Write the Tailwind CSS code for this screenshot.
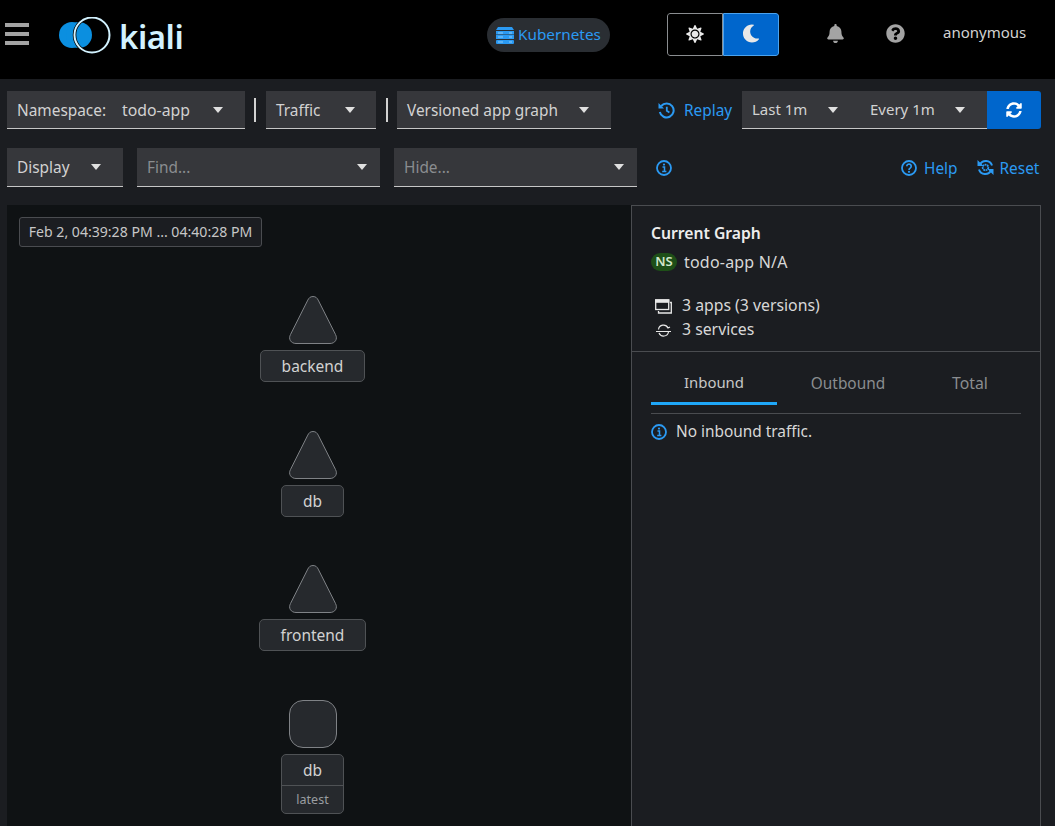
<!DOCTYPE html>
<html><head><meta charset="utf-8">
<script src="https://cdn.jsdelivr.net/npm/@tailwindcss/browser@4"></script>
</head>
<body class="m-0 bg-[#1b1d21] font-['Noto_Sans',sans-serif] text-[#e0e0e0] text-base overflow-hidden">
<div class="w-[1055px] h-[826px] flex flex-col overflow-hidden">
<header class="h-[79px] shrink-0 bg-black flex items-center relative">
  <div class="ml-[5px] w-[24px] flex flex-col gap-[5px] -mt-[12px]">
    <span class="h-[4px] bg-[#a3a3a3]"></span><span class="h-[4px] bg-[#a3a3a3]"></span><span class="h-[4px] bg-[#a3a3a3]"></span>
  </div>
  <svg class="ml-[30px] -mt-[7px]" width="53" height="38" viewBox="0 0 53 38"><circle cx="13" cy="18" r="13" fill="#0b8fe0"/><circle cx="20" cy="18" r="13" fill="#0b8fe0"/><circle cx="33" cy="18" r="17.500" fill="none" stroke="#000" stroke-width="3.500"/><circle cx="33" cy="18" r="17.500" fill="none" stroke="#d2f2ff" stroke-width="2"/></svg>
  <span class="ml-[7px] -mt-[7px] text-[33px] leading-none font-semibold text-[#d2f2ff] tracking-[-0.5px]">kiali</span>
  <div class="absolute left-[487px] top-[18px] w-[123px] h-[34px] rounded-full bg-[#2a2e33] flex items-center pl-[9px] gap-[4px] text-[#2b9af3] text-[15.300px]">
    <svg width="18" height="18" viewBox="0 0 18 18"><path d="M2 1h14l2 3H0z" fill="#2b9af3"/><rect y="5" width="18" height="3.500" fill="#2b9af3"/><rect y="9" width="18" height="4" fill="#2b9af3"/><rect y="14" width="18" height="4" rx="1" fill="#2b9af3"/><path d="M2 7h5M2 11h5M2 16h5" stroke="#a8d8f8" stroke-width=".8"/><path d="M13 7h3M13 11h3M13 16h3" stroke="#a8d8f8" stroke-width=".8"/></svg>
    <span class="-mt-[1px]">Kubernetes</span>
  </div>
  <div class="absolute left-[667px] top-[13px] w-[112px] h-[43px] flex rounded-[3px] overflow-hidden">
    <div class="w-[56px] border border-[#8a8d90] rounded-l-[3px] bg-black flex items-center justify-center pb-[2px]">
      <svg width="18" height="18" viewBox="0 0 512 512" fill="#e8e8e8"><path d="M256 160c-52.900 0-96 43.100-96 96s43.100 96 96 96 96-43.100 96-96-43.100-96-96-96zm246.400 80.500l-94.700-47.300 33.500-100.400c4.500-13.600-8.400-26.500-21.900-21.900l-100.400 33.500-47.400-94.800c-6.400-12.800-24.600-12.800-31 0l-47.300 94.700L92.700 70.800c-13.600-4.500-26.500 8.400-21.900 21.900l33.500 100.400-94.700 47.400c-12.800 6.400-12.800 24.600 0 31l94.700 47.300-33.500 100.500c-4.500 13.600 8.400 26.500 21.900 21.900l100.400-33.500 47.300 94.700c6.400 12.800 24.600 12.800 31 0l47.300-94.700 100.400 33.500c13.600 4.500 26.500-8.400 21.900-21.900l-33.500-100.400 94.700-47.300c13-6.500 13-24.700.2-31.100zm-155.900 106c-49.900 49.900-131.100 49.900-181 0-49.900-49.900-49.900-131.100 0-181 49.900-49.900 131.100-49.900 181 0 49.900 49.900 49.900 131.100 0 181z"/></svg>
    </div>
    <div class="flex-1 bg-[#0066cc] border border-[#4aa3ef] rounded-r-[3px] flex items-center justify-center pb-[2px]">
      <svg width="18" height="19" viewBox="0 0 512 512" fill="#e8e8e8"><path d="M283.211 512c78.962 0 151.079-35.925 198.857-94.792 7.068-8.708-.639-21.430-11.562-19.350-124.203 23.654-238.262-71.576-238.262-196.954 0-72.222 38.662-138.635 101.498-174.394 9.686-5.512 7.250-20.197-3.756-22.230A258.156 258.156 0 0 0 283.211 0c-141.309 0-256 114.511-256 256 0 141.309 114.511 256 256 256z"/></svg>
    </div>
  </div>
  <svg class="absolute left-[827px] top-[24px]" width="17" height="19" viewBox="0 0 448 512" fill="#a3a3a3"><path d="M224 512c35.320 0 63.970-28.650 63.970-64H160.030c0 35.350 28.650 64 63.970 64zm215.390-149.710c-19.320-20.760-55.470-51.990-55.470-154.290 0-77.700-54.480-139.900-127.940-155.160V32c0-17.670-14.320-32-31.980-32s-31.980 14.330-31.980 32v20.840C118.560 68.100 64.080 130.300 64.080 208c0 102.300-36.150 133.530-55.470 154.290-6 6.450-8.660 14.160-8.610 21.710.11 16.400 12.980 32 32.100 32h383.800c19.120 0 32-15.600 32.100-32 .05-7.550-2.610-15.270-8.610-21.710z"/></svg>
  <svg class="absolute left-[886px] top-[24px]" width="19" height="19" viewBox="0 0 512 512" fill="#a3a3a3"><path d="M504 256c0 136.997-111.043 248-248 248S8 392.997 8 256C8 119.083 119.043 8 256 8s248 111.083 248 248zM262.655 90c-54.497 0-89.255 22.957-116.549 63.758-3.536 5.286-2.353 12.415 2.715 16.258l34.699 26.310c5.205 3.947 12.621 3.008 16.665-2.122 17.864-22.658 30.113-35.797 57.303-35.797 20.429 0 45.698 13.148 45.698 32.958 0 14.976-12.363 22.667-32.534 33.976C247.128 238.528 216 254.941 216 296v4c0 6.627 5.373 12 12 12h56c6.627 0 12-5.373 12-12v-1.333c0-28.462 83.186-29.647 83.186-106.667 0-58.002-60.165-102-116.531-102zM256 338c-25.365 0-46 20.635-46 46 0 25.364 20.635 46 46 46s46-20.636 46-46c0-25.365-20.635-46-46-46z"/></svg>
  <span class="absolute left-[943px] top-[21px] text-[15px] text-[#d2d2d2] leading-[22px]">anonymous</span>
</header>

<div class="h-[38px] mt-[12px] shrink-0 flex items-stretch pl-[7px] text-[#d2d2d2] text-[15.400px]">
  <div class="w-[238px] bg-[#36373b] border-b border-[#c7c7c7] flex items-center pl-[10px] pr-[22px]"><span class="pt-[2px]">Namespace:</span><span class="ml-[16px] pt-[2px] text-[15.800px]">todo-app</span><svg class="ml-auto" width="10" height="6" viewBox="0 0 10 6" fill="#e0e0e0"><path d="M0 0h10L5 6z"/></svg></div>
  <span class="w-[2px] h-[24px] self-center bg-[#d2d2d2] ml-[9px]"></span>
  <div class="ml-[10px] w-[110px] bg-[#36373b] border-b border-[#c7c7c7] flex items-center pl-[10px] pr-[21px]"><span class="pt-[2px]">Traffic</span><svg class="ml-auto" width="10" height="6" viewBox="0 0 10 6" fill="#e0e0e0"><path d="M0 0h10L5 6z"/></svg></div>
  <span class="w-[2px] h-[24px] self-center bg-[#d2d2d2] ml-[10px]"></span>
  <div class="ml-[9px] w-[214px] bg-[#36373b] border-b border-[#c7c7c7] flex items-center pl-[10px] pr-[22px]"><span class="pt-[2px]">Versioned app graph</span><svg class="ml-auto" width="10" height="6" viewBox="0 0 10 6" fill="#e0e0e0"><path d="M0 0h10L5 6z"/></svg></div>
  <div class="ml-[47px] w-[84px] flex items-center text-[#2b9af3]">
    <svg width="17" height="17" viewBox="0 0 17 17" fill="none" stroke="#2b9af3" stroke-width="2"><path d="M3.200 4a7 7 0 1 1-1.400 6"/><path d="M.5 1v5.500H6z" fill="#2b9af3" stroke="none"/><path d="M8.800 4.800v4l2.600 1.700" stroke-width="1.800"/></svg>
    <span class="ml-[9px] pt-[2px]">Replay</span>
  </div>
  <div class="w-[245px] bg-[#36373b] border-b border-[#c7c7c7] flex items-center pl-[10px]">
    <span class="w-[76px] text-[15px]">Last 1m</span><svg width="10" height="6" viewBox="0 0 10 6" fill="#e0e0e0"><path d="M0 0h10L5 6z"/></svg>
    <span class="ml-[32px] w-[85px] text-[15px]">Every 1m</span><svg width="10" height="6" viewBox="0 0 10 6" fill="#e0e0e0"><path d="M0 0h10L5 6z"/></svg>
  </div>
  <div class="w-[54px] bg-[#0066cc] rounded-r-[3px] flex items-center justify-center">
    <svg width="16" height="16" viewBox="0 0 512 512" fill="#fff"><path d="M370.720 133.280C339.458 104.008 298.888 87.962 255.848 88c-77.458.068-144.328 53.178-162.791 126.850-1.344 5.363-6.122 9.150-11.651 9.150H24.103c-7.498 0-13.194-6.807-11.807-14.176C33.933 94.924 134.813 8 256 8c66.448 0 126.791 26.136 171.315 68.685L463.030 40.970C478.149 25.851 504 36.559 504 57.941V192c0 13.255-10.745 24-24 24H345.941c-21.382 0-32.090-25.851-16.971-40.971l41.750-41.749zM32 296h134.059c21.382 0 32.090 25.851 16.971 40.971l-41.750 41.750c31.262 29.273 71.835 45.319 114.876 45.280 77.418-.07 144.315-53.144 162.787-126.849 1.344-5.363 6.122-9.150 11.651-9.150h57.304c7.498 0 13.194 6.807 11.807 14.176C478.067 417.076 377.187 504 256 504c-66.448 0-126.791-26.136-171.315-68.685L48.970 471.030C33.851 486.149 8 475.441 8 454.059V320c0-13.255 10.745-24 24-24z"/></svg>
  </div>
</div>

<div class="h-[39px] mt-[19px] shrink-0 flex items-stretch pl-[7px] text-[#d2d2d2] text-[15.400px]">
  <div class="w-[116px] bg-[#36373b] border-b border-[#c7c7c7] flex items-center pl-[10px] pr-[22px]"><span class="pt-[2px]">Display</span><svg class="ml-auto" width="10" height="6" viewBox="0 0 10 6" fill="#e0e0e0"><path d="M0 0h10L5 6z"/></svg></div>
  <div class="ml-[14px] w-[243px] bg-[#36373b] border-b border-[#c7c7c7] flex items-center pl-[10px] pr-[13px] text-[#8a8d90]"><span class="pt-[2px]">Find...</span><svg class="ml-auto" width="10" height="6" viewBox="0 0 10 6" fill="#e0e0e0"><path d="M0 0h10L5 6z"/></svg></div>
  <div class="ml-[14px] w-[243px] bg-[#36373b] border-b border-[#c7c7c7] flex items-center pl-[10px] pr-[13px] text-[#8a8d90]"><span class="pt-[2px]">Hide...</span><svg class="ml-auto" width="10" height="6" viewBox="0 0 10 6" fill="#e0e0e0"><path d="M0 0h10L5 6z"/></svg></div>
  <svg class="ml-[19px] self-center" width="16" height="16" viewBox="0 0 16 16" fill="none" stroke="#2b9af3" stroke-width="1.800"><circle cx="8" cy="8" r="7"/><path d="M6.500 7h2v4.500M6.200 11.500h4.200" stroke-width="1.500"/><circle cx="8" cy="4.600" r="1.100" fill="#2b9af3" stroke="none"/></svg>
  <div class="ml-[229px] flex items-center text-[#2b9af3]">
    <svg width="16" height="16" viewBox="0 0 16 16" fill="none" stroke="#2b9af3" stroke-width="1.800"><circle cx="8" cy="8" r="7"/><path d="M5.800 6.300a2.200 2.200 0 1 1 3.400 1.800c-.8.500-1.200.9-1.200 1.800" stroke-width="1.700"/><circle cx="8" cy="11.800" r="1.100" fill="#2b9af3" stroke="none"/></svg>
    <span class="ml-[7px] pt-[2px]">Help</span>
    <svg class="ml-[19px]" width="17" height="17" viewBox="0 0 17 17" fill="none" stroke="#2b9af3" stroke-width="2"><path d="M3 5.500A6.500 6.500 0 0 1 15 6.500M14 11.500A6.500 6.500 0 0 1 2 10.500"/><path d="M.5 1v6h6zM16.500 16v-6h-6z" fill="#2b9af3" stroke="none"/><circle cx="8.500" cy="8.500" r="2.800" stroke-width="1.800" stroke-dasharray="1.800 .6"/></svg>
    <span class="ml-[6px] pt-[2px]">Reset</span>
  </div>
</div>

<main class="mt-[18px] flex-1 flex pl-[7px] pr-[14px] min-h-0">
  <div class="w-[624px] bg-[#0f1214] relative overflow-hidden">
    <div class="absolute left-[12px] top-[12px] w-[243px] h-[30px] bg-[#1b1d21] border border-[#4a4c50] rounded-[3px] flex items-center justify-center text-[14.100px] text-[#c7c7c7] whitespace-nowrap">Feb 2, 04:39:28 PM ... 04:40:28 PM</div>

    <svg class="absolute left-[281.500px] top-[91px]" width="48" height="48" viewBox="0 0 48 48"><path d="M24 .5c-2.800 0-4.200 1.600-5.200 3.600L1.500 38.500C-1 43 2 47.500 7 47.500h34c5 0 8-4.500 5.500-9L29.200 4.100C28.200 2.100 26.800.5 24 .5z" fill="#26292d" stroke="#7f8286" stroke-width="1"/></svg>
    <div class="absolute left-[253px] top-[145px] w-[105px] h-[32px] pt-[2px] bg-[#26292d] border border-[#4f5255] rounded-[5px] flex items-center justify-center text-[15.500px] text-[#d2d2d2]">backend</div>

    <svg class="absolute left-[281.500px] top-[226px]" width="48" height="48" viewBox="0 0 48 48"><path d="M24 .5c-2.800 0-4.200 1.600-5.200 3.600L1.500 38.500C-1 43 2 47.500 7 47.500h34c5 0 8-4.500 5.500-9L29.200 4.100C28.200 2.100 26.800.5 24 .5z" fill="#26292d" stroke="#7f8286" stroke-width="1"/></svg>
    <div class="absolute left-[274px] top-[280px] w-[63px] h-[32px] pt-[2px] bg-[#26292d] border border-[#4f5255] rounded-[5px] flex items-center justify-center text-[15.500px] text-[#d2d2d2]">db</div>

    <svg class="absolute left-[281.500px] top-[360px]" width="48" height="48" viewBox="0 0 48 48"><path d="M24 .5c-2.800 0-4.200 1.600-5.200 3.600L1.500 38.500C-1 43 2 47.500 7 47.500h34c5 0 8-4.500 5.500-9L29.200 4.100C28.200 2.100 26.800.5 24 .5z" fill="#26292d" stroke="#7f8286" stroke-width="1"/></svg>
    <div class="absolute left-[252px] top-[414px] w-[107px] h-[32px] pt-[2px] bg-[#26292d] border border-[#4f5255] rounded-[5px] flex items-center justify-center text-[15.500px] text-[#d2d2d2]">frontend</div>

    <div class="absolute left-[281.500px] top-[495px] w-[48px] h-[48px] bg-[#26292d] border border-[#7f8286] rounded-[14px]"></div>
    <div class="absolute left-[274px] top-[549px] w-[63px] h-[60px] bg-[#26292d] border border-[#4f5255] rounded-[5px] flex flex-col text-[#d2d2d2]">
      <div class="h-[31px] pt-[2px] flex items-center justify-center text-[15.500px] border-b border-[#4f5255]">db</div>
      <div class="flex-1 pt-[2px] flex items-center justify-center text-[12.500px] text-[#9a9da0]">latest</div>
    </div>
  </div>
  <aside class="w-[410px] border border-[#4a4c50] border-b-0 flex flex-col">
    <div class="h-[146px] shrink-0 border-b border-[#4a4c50] pl-[19px] pt-[16px]">
      <div class="font-semibold text-[#ededed] text-[15.700px] leading-[22px]">Current Graph</div>
      <div class="flex items-center mt-[6px] h-[24px]">
        <span class="w-[26px] h-[18px] rounded-full bg-[#1e4f18] text-[#d2e8cc] text-[13px] font-semibold flex items-center justify-center">NS</span>
        <span class="ml-[7px] text-[#d8d8d8] text-[16px] tracking-[0.2px]">todo-app N/A</span>
      </div>
      <div class="flex items-center mt-[20px] h-[24px] text-[#d8d8d8] text-[15.800px]">
        <svg class="ml-[4px]" width="17" height="15" viewBox="0 0 17 15" fill="none" stroke="#e8e8e8" stroke-width="1.300"><rect x=".7" y="1" width="13" height="9.500"/><path d="M.7 1h13v2.200H.7z" fill="#e8e8e8"/><path d="M15 3.500h1.300v10.500H3.500v-2"/></svg>
        <span class="ml-[10px]">3 apps (3 versions)</span>
      </div>
      <div class="flex items-center h-[24px] text-[#d8d8d8] text-[15.800px]">
        <svg class="ml-[4px]" width="17" height="13" viewBox="0 0 17 13" fill="none" stroke="#e8e8e8" stroke-width="1.200"><path d="M3.500 5.500a5 5 0 0 1 9.500-1.500l2-1M13.500 8a5 5 0 0 1-9.500 1M1 7.500h15"/></svg>
        <span class="ml-[10px]">3 services</span>
      </div>
    </div>
    <div class="px-[19px]">
      <div class="h-[62px] flex border-b border-[#4a4c50]">
        <div class="w-[126px] h-[53px] pt-[11px] border-b-[3px] border-[#1fa7f8] flex items-center justify-center text-[#c7c7c7] text-[14.900px]">Inbound</div>
        <div class="w-[142px] h-[53px] pt-[11px] flex items-center justify-center text-[#8a8d90] text-[15.400px]">Outbound</div>
        <div class="w-[102px] h-[53px] pt-[11px] flex items-center justify-center text-[#8a8d90] text-[15.800px]">Total</div>
      </div>
      <div class="flex items-center h-[36px] text-[#d8d8d8] text-[15.400px]">
        <svg width="16" height="16" viewBox="0 0 16 16" fill="none" stroke="#2b9af3" stroke-width="1.800"><circle cx="8" cy="8" r="7"/><path d="M6.500 7h2v4.500M6.200 11.500h4.200" stroke-width="1.500"/><circle cx="8" cy="4.600" r="1.100" fill="#2b9af3" stroke="none"/></svg>
        <span class="ml-[9px]">No inbound traffic.</span>
      </div>
    </div>
  </aside>
</main>
</div>
</body></html>
